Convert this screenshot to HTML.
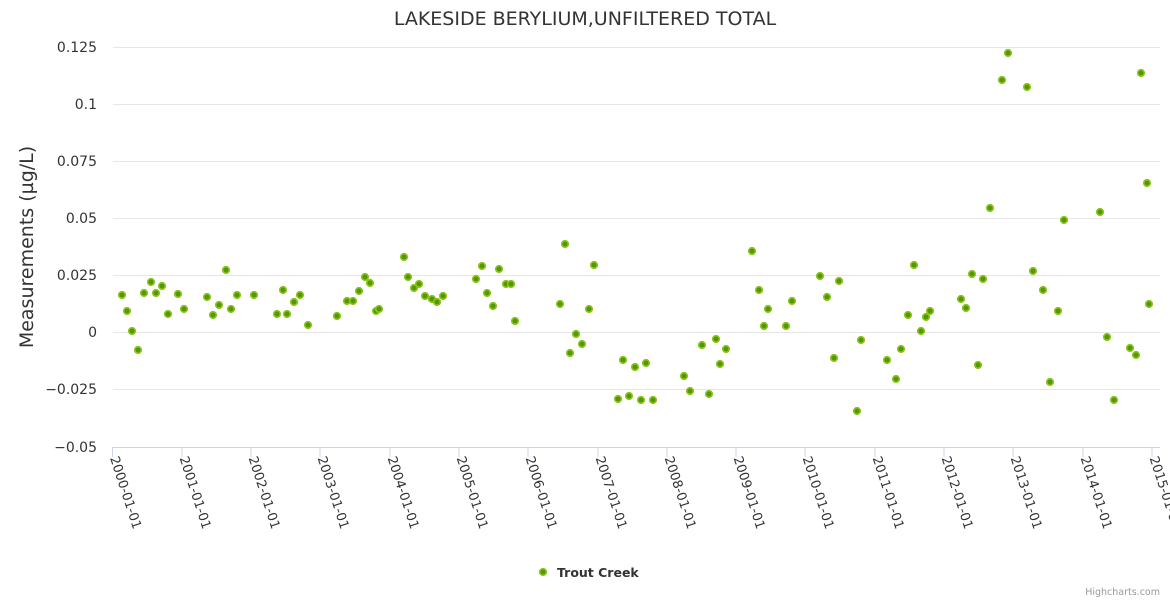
<!DOCTYPE html>
<html><head><meta charset="utf-8"><style>
html,body{margin:0;padding:0;background:#fff;}
svg{display:block;font-family:"DejaVu Sans","Liberation Sans",sans-serif;}
</style></head><body>
<svg width="1170" height="600" viewBox="0 0 1170 600" xmlns="http://www.w3.org/2000/svg">
<rect width="1170" height="600" fill="#fff"/>
<text x="585" y="25" text-anchor="middle" font-size="19" fill="#333">LAKESIDE BERYLIUM,UNFILTERED TOTAL</text>
<g stroke="#e6e6e6" stroke-width="1">
<line x1="113" y1="47.5" x2="1160" y2="47.5"/>
<line x1="113" y1="104.5" x2="1160" y2="104.5"/>
<line x1="113" y1="161.5" x2="1160" y2="161.5"/>
<line x1="113" y1="218.5" x2="1160" y2="218.5"/>
<line x1="113" y1="275.5" x2="1160" y2="275.5"/>
<line x1="113" y1="332.5" x2="1160" y2="332.5"/>
<line x1="113" y1="389.5" x2="1160" y2="389.5"/>
</g>
<line x1="113" y1="447.5" x2="1160" y2="447.5" stroke="#ccd6eb"/>
<g font-size="14" fill="#333" text-anchor="end">
<text x="97" y="52">0.125</text>
<text x="97" y="109">0.1</text>
<text x="97" y="166">0.075</text>
<text x="97" y="223">0.05</text>
<text x="97" y="280">0.025</text>
<text x="97" y="337">0</text>
<text x="97" y="394">−0.025</text>
<text x="97" y="452">−0.05</text>
</g>
<text transform="translate(33,247) rotate(-90)" text-anchor="middle" font-size="19" fill="#333">Measurements (µg/L)</text>
<g stroke="#ccd6eb">
<line x1="112.5" y1="447" x2="112.5" y2="457"/><line x1="182" y1="447" x2="182" y2="457"/><line x1="251" y1="447" x2="251" y2="457"/><line x1="320" y1="447" x2="320" y2="457"/><line x1="390" y1="447" x2="390" y2="457"/><line x1="459" y1="447" x2="459" y2="457"/><line x1="528" y1="447" x2="528" y2="457"/><line x1="598" y1="447" x2="598" y2="457"/><line x1="667" y1="447" x2="667" y2="457"/><line x1="736" y1="447" x2="736" y2="457"/><line x1="805" y1="447" x2="805" y2="457"/><line x1="875" y1="447" x2="875" y2="457"/><line x1="944" y1="447" x2="944" y2="457"/><line x1="1013" y1="447" x2="1013" y2="457"/><line x1="1083" y1="447" x2="1083" y2="457"/><line x1="1152" y1="447" x2="1152" y2="457"/>
</g>
<g font-size="13" fill="#333">
<text transform="translate(110,458) rotate(72)">2000-01-01</text>
<text transform="translate(179.5,458) rotate(72)">2001-01-01</text>
<text transform="translate(248.5,458) rotate(72)">2002-01-01</text>
<text transform="translate(317.5,458) rotate(72)">2003-01-01</text>
<text transform="translate(387.5,458) rotate(72)">2004-01-01</text>
<text transform="translate(456.5,458) rotate(72)">2005-01-01</text>
<text transform="translate(525.5,458) rotate(72)">2006-01-01</text>
<text transform="translate(595.5,458) rotate(72)">2007-01-01</text>
<text transform="translate(664.5,458) rotate(72)">2008-01-01</text>
<text transform="translate(733.5,458) rotate(72)">2009-01-01</text>
<text transform="translate(802.5,458) rotate(72)">2010-01-01</text>
<text transform="translate(872.5,458) rotate(72)">2011-01-01</text>
<text transform="translate(941.5,458) rotate(72)">2012-01-01</text>
<text transform="translate(1010.5,458) rotate(72)">2013-01-01</text>
<text transform="translate(1080.5,458) rotate(72)">2014-01-01</text>
<text transform="translate(1149.5,458) rotate(72)">2015-01-01</text>
</g>
<g fill="#4f9a00" stroke="#8fc31f" stroke-width="1.6">
<circle cx="122" cy="295" r="3.3"/><circle cx="127" cy="311" r="3.3"/><circle cx="132" cy="331" r="3.3"/><circle cx="138" cy="350" r="3.3"/><circle cx="144" cy="293" r="3.3"/><circle cx="151" cy="282" r="3.3"/><circle cx="156" cy="293" r="3.3"/><circle cx="162" cy="286" r="3.3"/><circle cx="168" cy="314" r="3.3"/><circle cx="178" cy="294" r="3.3"/><circle cx="184" cy="309" r="3.3"/><circle cx="207" cy="297" r="3.3"/><circle cx="213" cy="315" r="3.3"/><circle cx="219" cy="305" r="3.3"/><circle cx="226" cy="270" r="3.3"/><circle cx="231" cy="309" r="3.3"/><circle cx="237" cy="295" r="3.3"/><circle cx="254" cy="295" r="3.3"/><circle cx="277" cy="314" r="3.3"/><circle cx="283" cy="290" r="3.3"/><circle cx="287" cy="314" r="3.3"/><circle cx="294" cy="302" r="3.3"/><circle cx="300" cy="295" r="3.3"/><circle cx="308" cy="325" r="3.3"/><circle cx="337" cy="316" r="3.3"/><circle cx="347" cy="301" r="3.3"/><circle cx="353" cy="301" r="3.3"/><circle cx="359" cy="291" r="3.3"/><circle cx="365" cy="277" r="3.3"/><circle cx="370" cy="283" r="3.3"/><circle cx="376" cy="311" r="3.3"/><circle cx="379" cy="309" r="3.3"/><circle cx="404" cy="257" r="3.3"/><circle cx="408" cy="277" r="3.3"/><circle cx="414" cy="288" r="3.3"/><circle cx="419" cy="284" r="3.3"/><circle cx="425" cy="296" r="3.3"/><circle cx="432" cy="299" r="3.3"/><circle cx="437" cy="302" r="3.3"/><circle cx="443" cy="296" r="3.3"/><circle cx="476" cy="279" r="3.3"/><circle cx="482" cy="266" r="3.3"/><circle cx="487" cy="293" r="3.3"/><circle cx="493" cy="306" r="3.3"/><circle cx="499" cy="269" r="3.3"/><circle cx="506" cy="284" r="3.3"/><circle cx="511" cy="284" r="3.3"/><circle cx="515" cy="321" r="3.3"/><circle cx="560" cy="304" r="3.3"/><circle cx="565" cy="244" r="3.3"/><circle cx="570" cy="353" r="3.3"/><circle cx="576" cy="334" r="3.3"/><circle cx="582" cy="344" r="3.3"/><circle cx="589" cy="309" r="3.3"/><circle cx="594" cy="265" r="3.3"/><circle cx="618" cy="399" r="3.3"/><circle cx="623" cy="360" r="3.3"/><circle cx="629" cy="396" r="3.3"/><circle cx="635" cy="367" r="3.3"/><circle cx="641" cy="400" r="3.3"/><circle cx="646" cy="363" r="3.3"/><circle cx="653" cy="400" r="3.3"/><circle cx="684" cy="376" r="3.3"/><circle cx="690" cy="391" r="3.3"/><circle cx="702" cy="345" r="3.3"/><circle cx="709" cy="394" r="3.3"/><circle cx="716" cy="339" r="3.3"/><circle cx="720" cy="364" r="3.3"/><circle cx="726" cy="349" r="3.3"/><circle cx="752" cy="251" r="3.3"/><circle cx="759" cy="290" r="3.3"/><circle cx="764" cy="326" r="3.3"/><circle cx="768" cy="309" r="3.3"/><circle cx="786" cy="326" r="3.3"/><circle cx="792" cy="301" r="3.3"/><circle cx="820" cy="276" r="3.3"/><circle cx="827" cy="297" r="3.3"/><circle cx="834" cy="358" r="3.3"/><circle cx="839" cy="281" r="3.3"/><circle cx="857" cy="411" r="3.3"/><circle cx="861" cy="340" r="3.3"/><circle cx="887" cy="360" r="3.3"/><circle cx="896" cy="379" r="3.3"/><circle cx="901" cy="349" r="3.3"/><circle cx="908" cy="315" r="3.3"/><circle cx="914" cy="265" r="3.3"/><circle cx="921" cy="331" r="3.3"/><circle cx="926" cy="317" r="3.3"/><circle cx="930" cy="311" r="3.3"/><circle cx="961" cy="299" r="3.3"/><circle cx="966" cy="308" r="3.3"/><circle cx="972" cy="274" r="3.3"/><circle cx="978" cy="365" r="3.3"/><circle cx="983" cy="279" r="3.3"/><circle cx="990" cy="208" r="3.3"/><circle cx="1002" cy="80" r="3.3"/><circle cx="1008" cy="53" r="3.3"/><circle cx="1027" cy="87" r="3.3"/><circle cx="1033" cy="271" r="3.3"/><circle cx="1043" cy="290" r="3.3"/><circle cx="1050" cy="382" r="3.3"/><circle cx="1058" cy="311" r="3.3"/><circle cx="1064" cy="220" r="3.3"/><circle cx="1100" cy="212" r="3.3"/><circle cx="1107" cy="337" r="3.3"/><circle cx="1114" cy="400" r="3.3"/><circle cx="1130" cy="348" r="3.3"/><circle cx="1136" cy="355" r="3.3"/><circle cx="1141" cy="73" r="3.3"/><circle cx="1147" cy="183" r="3.3"/><circle cx="1149" cy="304" r="3.3"/>
<circle cx="543" cy="572" r="3.3"/>
</g>
<text x="557" y="577" font-size="12.5" font-weight="bold" fill="#333">Trout Creek</text>
<text x="1160" y="595" text-anchor="end" font-size="9.5" fill="#999">Highcharts.com</text>
</svg>
</body></html>
